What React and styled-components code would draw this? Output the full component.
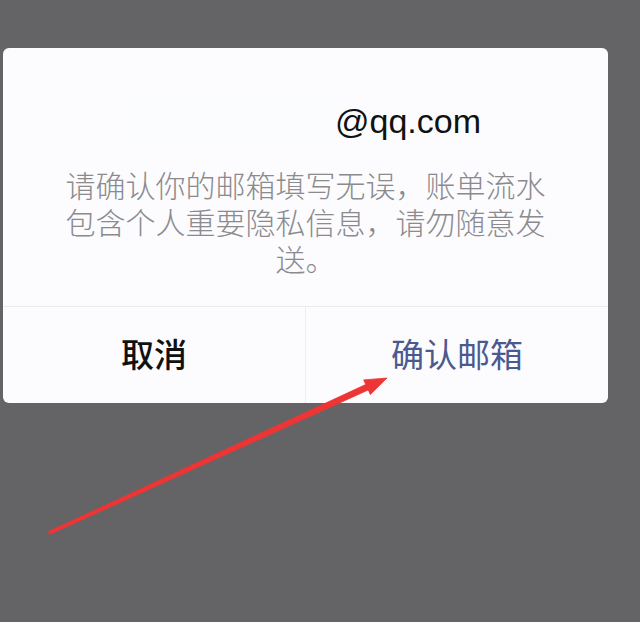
import React from "react";
import styled, { createGlobalStyle } from "styled-components";

const GlobalStyle = createGlobalStyle`
  html, body {
    margin: 0;
    padding: 0;
    background: #646466;
  }
  body {
    font-family: "Noto Sans CJK SC", "Noto Sans", sans-serif;
  }
`;

const Page = styled.div`
  position: relative;
  width: 640px;
  height: 622px;
  padding: 48px 0 0 3px;
  box-sizing: border-box;
  background: #646466;
  overflow: hidden;
`;

const Dialog = styled.div`
  width: 605px;
  height: 355px;
  background: #fcfcfe;
  border-radius: 6px;
  display: flex;
  flex-direction: column;
  overflow: hidden;
`;

const Body = styled.div`
  height: 258px;
  box-sizing: border-box;
  padding-top: 53px;
  display: flex;
  flex-direction: column;
  align-items: center;
`;

const EmailRow = styled.div`
  display: flex;
  align-items: center;
  justify-content: center;
  height: 40px;
  font-family: "Liberation Sans", Roboto, "Noto Sans", sans-serif;
  font-size: 34px;
  color: #111;
`;

const Masked = styled.span`
  display: inline-block;
  width: 205px;
  height: 36px;
  background: #fbfcfe;
`;

const Message = styled.p`
  width: 484px;
  margin: 25px 0 0;
  font-size: 30px;
  font-weight: 300;
  line-height: 37px;
  color: #8b8b8e;
  text-align: center;
`;

const Footer = styled.div`
  flex: 1;
  display: flex;
  border-top: 1px solid #ececf0;
`;

const Action = styled.button`
  flex: 1;
  border: none;
  background: transparent;
  font-family: "Noto Sans CJK SC", "Noto Sans", sans-serif;
  font-size: 33px;
  font-weight: ${(p) => (p.$primary ? 400 : 500)};
  color: ${(p) => (p.$primary ? "#4b5a8e" : "#111")};
  padding: 0 0 4px;
  cursor: pointer;
  & + & {
    border-left: 1px solid #eeeef2;
  }
`;

const Arrow = styled.svg`
  position: absolute;
  left: 0;
  top: 0;
  pointer-events: none;
`;

export default function App() {
  return (
    <>
      <GlobalStyle />
      <Page>
        <Dialog>
          <Body>
            <EmailRow>
              <Masked />
              <span>@qq.com</span>
            </EmailRow>
            <Message>
              请确认你的邮箱填写无误，账单流水包含个人重要隐私信息，请勿随意发送。
            </Message>
          </Body>
          <Footer>
            <Action>取消</Action>
            <Action $primary>确认邮箱</Action>
          </Footer>
        </Dialog>
        <Arrow width="640" height="622" viewBox="0 0 640 622">
          <polygon
            points="48.4,531.6 365.7,384.5 363.7,379.9 387,378 370.3,394.5 368.3,389.9 49.6,534.4"
            fill="#ee3535"
            stroke="#ee3535"
            strokeWidth="0.8"
            strokeLinejoin="round"
          />
        </Arrow>
      </Page>
    </>
  );
}
